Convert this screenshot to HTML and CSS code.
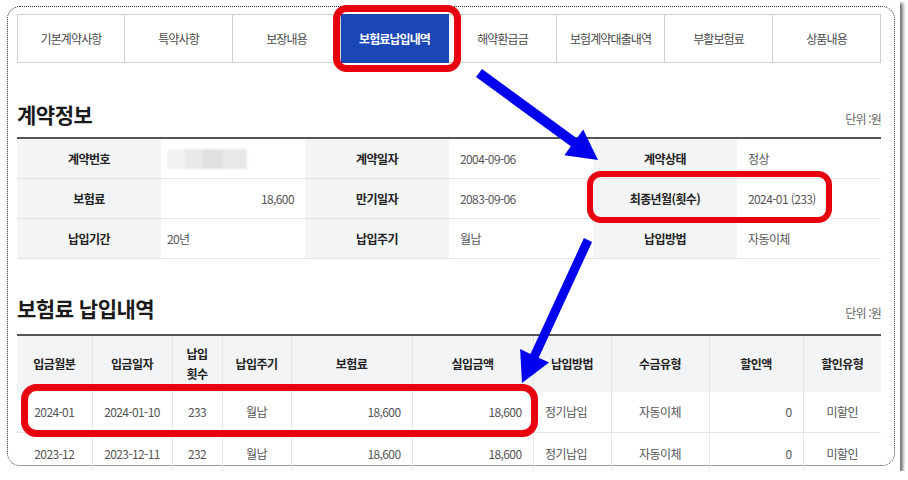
FILE: index.html
```html
<!DOCTYPE html>
<html lang="ko">
<head>
<meta charset="utf-8">
<title>보험료 납입내역</title>
<link rel="stylesheet" href="styles.css">
</head>
<body>
<div class="shot">
  <div class="frame">
    <ul class="tabs">
      <li class="tab">기본계약사항</li>
      <li class="tab">특약사항</li>
      <li class="tab">보장내용</li>
      <li class="tab on">보험료납입내역</li>
      <li class="tab">해약환급금</li>
      <li class="tab">보험계약대출내역</li>
      <li class="tab">부활보험료</li>
      <li class="tab">상품내용</li>
    </ul>

    <div class="sec-head first">
      <h2>계약정보</h2>
      <span class="unit">단위 :원</span>
    </div>
    <table class="info">
      <colgroup><col><col><col><col><col><col></colgroup>
      <tbody>
        <tr>
          <th>계약번호</th>
          <td class="pl6"><span class="blur"></span></td>
          <th>계약일자</th>
          <td>2004-09-06</td>
          <th>계약상태</th>
          <td>정상</td>
        </tr>
        <tr>
          <th>보험료</th>
          <td class="r">18,600</td>
          <th>만기일자</th>
          <td>2083-09-06</td>
          <th>최종년월(횟수)</th>
          <td>2024-01 (233)</td>
        </tr>
        <tr>
          <th>납입기간</th>
          <td class="pl6">20년</td>
          <th>납입주기</th>
          <td>월납</td>
          <th>납입방법</th>
          <td>자동이체</td>
        </tr>
      </tbody>
    </table>

    <div class="sec-head second">
      <h2>보험료 납입내역</h2>
      <span class="unit">단위 :원</span>
    </div>
    <table class="list">
      <colgroup>
        <col class="c1"><col class="c2"><col class="c3"><col class="c4"><col class="c5">
        <col class="c6"><col class="c7"><col class="c8"><col class="c9"><col class="c10">
      </colgroup>
      <thead>
        <tr>
          <th>입금월분</th>
          <th>입금일자</th>
          <th>납입<br>횟수</th>
          <th>납입주기</th>
          <th>보험료</th>
          <th>실입금액</th>
          <th>납입방법</th>
          <th>수금유형</th>
          <th>할인액</th>
          <th>할인유형</th>
        </tr>
      </thead>
      <tbody>
        <tr>
          <td>2024-01</td>
          <td>2024-01-10</td>
          <td>233</td>
          <td>월납</td>
          <td class="r">18,600</td>
          <td class="r">18,600</td>
          <td class="m">정기납입</td>
          <td>자동이체</td>
          <td class="r">0</td>
          <td>미할인</td>
        </tr>
        <tr>
          <td>2023-12</td>
          <td>2023-12-11</td>
          <td>232</td>
          <td>월납</td>
          <td class="r">18,600</td>
          <td class="r">18,600</td>
          <td class="m">정기납입</td>
          <td>자동이체</td>
          <td class="r">0</td>
          <td>미할인</td>
        </tr>
      </tbody>
    </table>
  </div>

  <svg class="marks" width="900" height="471" viewBox="0 0 900 471" aria-hidden="true">
    <g fill="none" stroke="#e8000e" stroke-width="7">
      <rect x="336.5" y="8.5" width="121" height="60" rx="10"/>
      <rect x="24.5" y="387.5" width="510" height="46" rx="12"/>
    </g>
    <rect x="590" y="174" width="239" height="46" rx="11" fill="none" stroke="#e8000e" stroke-width="6"/>
    <g fill="#0000ee">
      <polygon points="482,69 576.8,138.3 583.2,129.4 598,160 564.4,155.2 570.8,146.3 476,77"/>
      <polygon points="592.1,241.9 538.7,357.7 549.1,362.5 522,383 520.1,349.1 530.5,353.9 583.9,238.1"/>
    </g>
  </svg>
</div>
</body>
</html>
```

FILE: styles.css
```css
* { box-sizing: border-box; }

html, body {
  margin: 0;
  padding: 0;
  background: #fff;
}

body {
  font-family: "Noto Sans CJK KR", "Noto Sans", sans-serif;
  font-size: 12px;
  color: #555;
}

.shot {
  position: relative;
  width: 900px;
  height: 471px;
  background: #fff;
  overflow: hidden;
  box-shadow: 3px 3px 3px rgba(0, 0, 0, 0.55);
}

.frame {
  margin: 6px 0 0 7px;
  width: 888px;
  height: 460px;
  border: 1px dotted #333;
  border-radius: 13px;
  padding: 7px 0 0 9px;
}

/* tabs */
.tabs {
  display: grid;
  grid-template-columns: repeat(8, 108px);
  width: 864px;
  margin: 0;
  padding: 0;
  list-style: none;
}

.tab {
  height: 49px;
  display: flex;
  align-items: center;
  justify-content: center;
  border: 1px solid #cfcfcf;
  border-left: 0;
  background: #fff;
  color: #4a4a4a;
  font-size: 12px;
  letter-spacing: -0.9px;
}

.tab:first-child { border-left: 1px solid #cfcfcf; }

.tab.on {
  background: #1b47b6;
  border-color: #1b47b6;
  color: #fff;
  font-weight: 700;
}

/* section headings */
.sec-head {
  display: flex;
  justify-content: space-between;
  align-items: flex-end;
  width: 864px;
}

.sec-head.first { margin: 39px 0 10px; }
.sec-head.second { margin: 37px 0 13px; }

.sec-head h2 {
  margin: 0;
  font-size: 21px;
  line-height: 25px;
  font-weight: 700;
  color: #1a1a1a;
  letter-spacing: -0.5px;
}

.unit {
  font-size: 12px;
  line-height: 14px;
  color: #666;
  letter-spacing: -0.8px;
  margin-bottom: 1px;
}

/* tables */
table {
  width: 864px;
  border-collapse: collapse;
  table-layout: fixed;
}

.info {
  border-top: 2px solid #555;
  border-bottom: 1px solid #bdbdbd;
}

.info col { width: 144px; }

.info th,
.info td {
  height: 40px;
  padding: 0 11px;
  border-bottom: 1px solid #e3e3e3;
  font-size: 12px;
  letter-spacing: -0.6px;
}

.info th {
  background: #f3f4f5;
  color: #222;
  font-weight: 700;
  text-align: center;
}

.info td {
  color: #555;
  text-align: left;
}

.info td.pl6 { padding-left: 6px; }

.info td.r,
.list td.r {
  text-align: right;
  padding-right: 11px;
}

.blur {
  display: inline-block;
  vertical-align: middle;
  width: 80px;
  height: 20px;
  background: linear-gradient(90deg, #f2f2f2 0 22%, #e9e9e9 22% 45%, #e0e0e0 45% 70%, #e8e8e8 70% 100%);
  filter: blur(1px);
}

.list { border-top: 2px solid #555; }

.list .c1 { width: 75px; }
.list .c2 { width: 80px; }
.list .c3 { width: 50px; }
.list .c4 { width: 69px; }
.list .c5 { width: 121px; }
.list .c6 { width: 121px; }
.list .c7 { width: 78px; }
.list .c8 { width: 98px; }
.list .c9 { width: 94px; }
.list .c10 { width: 78px; }

.list th,
.list td {
  padding: 0;
  border-left: 1px solid #e6e6e6;
  font-size: 12px;
  letter-spacing: -0.6px;
}

.list th:first-child,
.list td:first-child { border-left: 0; }

.list th {
  height: 57px;
  background: #f3f4f6;
  color: #222;
  font-weight: 700;
  line-height: 20px;
  text-align: center;
}

.list td {
  height: 41px;
  border-bottom: 1px solid #e3e3e3;
  color: #555;
  text-align: center;
}

.list td.m { padding-right: 12px; }

/* annotation overlay */
.marks {
  position: absolute;
  left: 0;
  top: 0;
  pointer-events: none;
}
```
